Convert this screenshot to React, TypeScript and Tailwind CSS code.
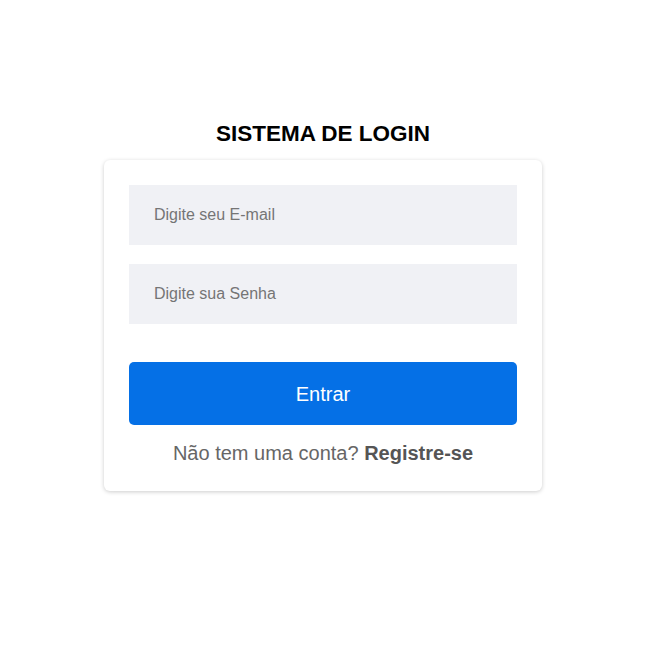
export default function App() {
  return (
    <div className="min-h-screen w-full bg-white flex flex-col items-center pt-[120px]" style={{ fontFamily: '"Liberation Sans", Arial, sans-serif' }}>
      <h1 className="text-[22.5px] leading-[28px] font-bold text-black mb-[12px]">SISTEMA DE LOGIN</h1>
      <div className="w-[438px] bg-white rounded-[6px] shadow-[0_1px_4px_rgba(0,0,0,0.2)] px-[25px] pt-[25px] pb-[26px] flex flex-col">
        <input
          type="email"
          placeholder="Digite seu E-mail"
          className="h-[60px] w-full bg-[#f0f1f5] px-[25px] text-[16px] text-[#333] placeholder:text-[#757575] outline-none"
        />
        <input
          type="password"
          placeholder="Digite sua Senha"
          className="mt-[19px] h-[60px] w-full bg-[#f0f1f5] px-[25px] text-[16px] text-[#333] placeholder:text-[#757575] outline-none"
        />
        <button className="mt-[38px] h-[63px] w-full rounded-[5px] bg-[#0570e6] text-white text-[20px]">
          Entrar
        </button>
        <p className="mt-[16px] text-center text-[20px] leading-[24px] text-[#666]">
          Não tem uma conta? <a className="font-bold text-[#555]">Registre-se</a>
        </p>
      </div>
    </div>
  );
}
